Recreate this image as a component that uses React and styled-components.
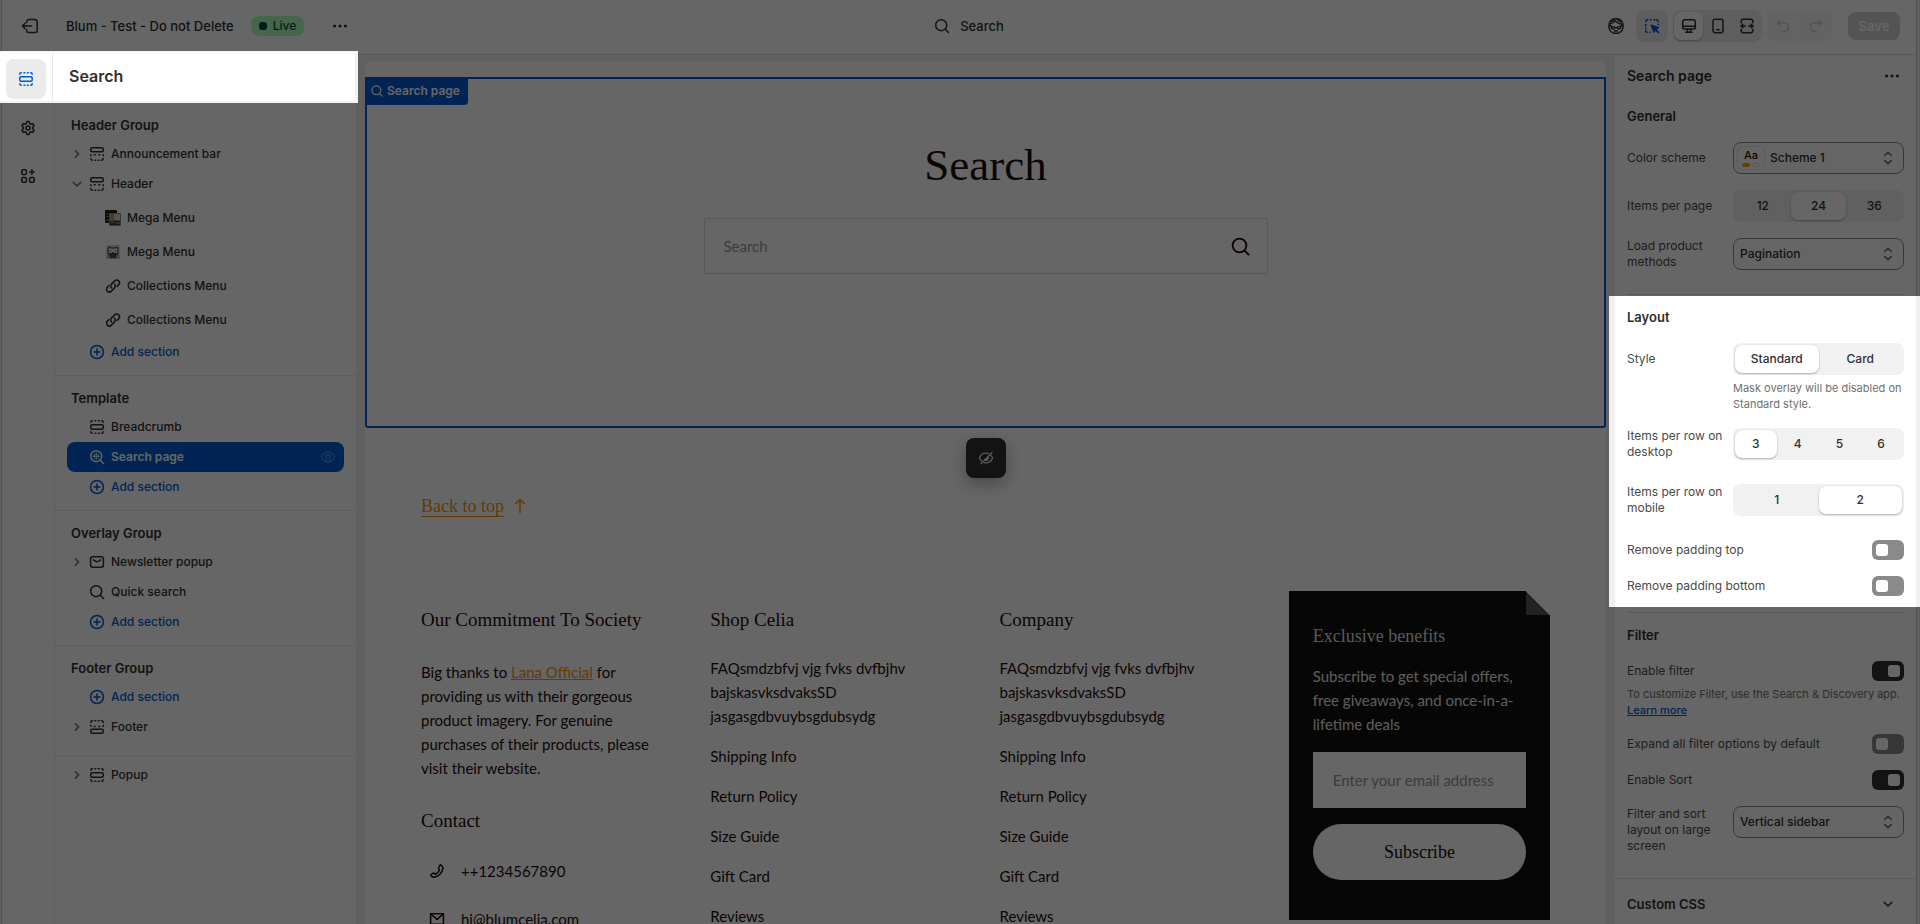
import React, { useState } from "react";
import styled, { createGlobalStyle, css } from "styled-components";

const SANS = `Inter, "Liberation Sans", sans-serif`;
const SERIF = `"Liberation Serif", serif`;
const STORE = `Lato, "Open Sans", sans-serif`;

/* ---------- icons ---------- */

const Icon = ({ size = 20, sw = 1.5, children }) => (
  <svg
    width={size}
    height={size}
    viewBox="0 0 20 20"
    fill="none"
    stroke="currentColor"
    strokeWidth={sw}
    strokeLinecap="round"
    strokeLinejoin="round"
    aria-hidden="true"
  >
    {children}
  </svg>
);

const SectionIcon = () => (
  <Icon>
    <rect x="3.8" y="7.8" width="12.4" height="4.4" rx="1.2" />
    <path d="M3.8 5.2c0-.9.6-1.5 1.5-1.5M16.2 5.2c0-.9-.6-1.5-1.5-1.5M8 3.7h.8M11.4 3.7h.8M3.8 14.8c0 .9.6 1.5 1.5 1.5M16.2 14.8c0 .9-.6 1.5-1.5 1.5M8 16.3h.8M11.4 16.3h.8" />
  </Icon>
);

const HeaderIcon = () => (
  <Icon>
    <rect x="3.8" y="3.8" width="12.4" height="4" rx="1.2" />
    <path d="M3.8 10.8v1M16.2 10.8v1M3.8 14.6c0 1 .7 1.7 1.6 1.7M16.2 14.6c0 1-.7 1.7-1.6 1.7M8 16.3h.8M11.4 16.3h.8M7.2 10.8h1M11.8 10.8h1" />
  </Icon>
);

const FooterIcon = () => (
  <Icon>
    <rect x="3.8" y="12.2" width="12.4" height="4" rx="1.2" />
    <path d="M3.8 9.2v-1M16.2 9.2v-1M3.8 5.4c0-1 .7-1.7 1.6-1.7M16.2 5.4c0-1-.7-1.7-1.6-1.7M8 3.7h.8M11.4 3.7h.8M7.2 9.4h1M11.8 9.4h1" />
  </Icon>
);

const SearchIcon = ({ size, sw }) => (
  <Icon size={size} sw={sw}>
    <circle cx="9.2" cy="9.2" r="5.5" />
    <path d="m13.3 13.3 3.2 3.2" />
  </Icon>
);

const SearchPageIcon = () => (
  <Icon sw={1.4}>
    <circle cx="9.2" cy="9.2" r="5.5" />
    <path d="m13.3 13.3 3.2 3.2" />
    <path d="M9.2 6v6.4M6 9.2h6.4" strokeWidth="1" />
    <path d="M7.2 6.8v4.8M11.2 6.8v4.8" strokeWidth="0.6" />
  </Icon>
);

const PlusIcon = () => (
  <Icon>
    <circle cx="10" cy="10" r="6.5" />
    <path d="M10 7v6M7 10h6" />
  </Icon>
);

const LinkIcon = () => (
  <Icon>
    <path d="M8.6 11.9a2.8 2.8 0 0 1 0-4l3-3a2.8 2.8 0 0 1 4 4l-1.5 1.5" />
    <path d="M11.4 8.1a2.8 2.8 0 0 1 0 4l-3 3a2.8 2.8 0 0 1-4-4l1.5-1.5" />
  </Icon>
);

const MailIcon = ({ sharp }) => (
  <Icon>
    <rect x="3.6" y="4.8" width="12.8" height="10.4" rx={sharp ? 0 : 2.2} />
    <path d={sharp ? "m4 5.2 6 5.2 6-5.2" : "m6.4 7.8 2.6 1.7c.6.4 1.4.4 2 0l2.6-1.7"} />
  </Icon>
);

const ChevronRight = () => (
  <Icon>
    <path d="m8.4 6.8 3.2 3.2-3.2 3.2" />
  </Icon>
);

const ChevronDown = () => (
  <Icon>
    <path d="m6.2 8.4 3.8 3.6 3.8-3.6" />
  </Icon>
);

const SelectIcon = () => (
  <Icon>
    <path d="m6.8 7.4 3.2-3 3.2 3M6.8 12.6l3.2 3 3.2-3" />
  </Icon>
);

const DotsIcon = () => (
  <Icon>
    <g fill="currentColor" stroke="none">
      <circle cx="4.6" cy="10" r="1.6" />
      <circle cx="10" cy="10" r="1.6" />
      <circle cx="15.4" cy="10" r="1.6" />
    </g>
  </Icon>
);

const ExitIcon = () => (
  <Icon>
    <path d="M6.6 6.6V5.8a2.3 2.3 0 0 1 2.3-2.3h6a2.3 2.3 0 0 1 2.3 2.3v8.4a2.3 2.3 0 0 1-2.3 2.3h-6a2.3 2.3 0 0 1-2.3-2.3v-.8" />
    <path d="M11.6 10H2.4M5 7.4 2.4 10 5 12.6" />
  </Icon>
);

const GearIcon = () => (
  <Icon>
    <path d="M8.9 3.5h2.2l.5 1.9 1.4.8 1.9-.5 1.2 2-1.4 1.4v1.8l1.4 1.4-1.2 2-1.9-.5-1.4.8-.5 1.9H8.9l-.5-1.9-1.4-.8-1.9.5-1.2-2 1.4-1.4V9.1L3.9 7.7l1.2-2 1.9.5 1.4-.8z" />
    <circle cx="10" cy="10" r="2" />
  </Icon>
);

const AppsIcon = () => (
  <Icon>
    <rect x="3.8" y="3.8" width="4.6" height="4.6" rx="1.2" />
    <rect x="3.8" y="11.6" width="4.6" height="4.6" rx="1.2" />
    <rect x="11.6" y="11.6" width="4.6" height="4.6" rx="1.2" />
    <path d="M13.9 3.8v4.6M11.6 6.1h4.6" />
  </Icon>
);

const EyeIcon = () => (
  <Icon sw={1.3}>
    <path d="M3.4 10c1.2-2.9 3.7-4.8 6.6-4.8s5.4 1.9 6.6 4.8c-1.2 2.9-3.7 4.8-6.6 4.8S4.6 12.9 3.4 10z" />
    <circle cx="10" cy="10" r="2.3" />
  </Icon>
);

const EyeOffIcon = () => (
  <Icon sw={1.4}>
    <path d="M12.5 5.6A6.5 6.5 0 0 0 10 5.1C7 5.1 4.5 7 3.4 10c.5 1.2 1.2 2.2 2.1 3M14.7 7.2c.8.7 1.4 1.7 1.9 2.8-1.2 3-3.6 4.9-6.6 4.9-.7 0-1.3-.1-1.9-.3" />
    <path d="M16 4.5 5 15.8M12.3 9.6a2.4 2.4 0 0 1-2.8 2.7z" />
  </Icon>
);

const SidekickIcon = () => (
  <Icon sw={1.4}>
    <rect x="3" y="2.8" width="14" height="14.4" rx="6.2" />
    <path d="M3.6 8.2C6 7.6 8 6.4 9 4.6c1.2 1.8 3.8 3.2 7.4 3.6M5.4 5.4 8 3.2M11.4 4l3 1.8" />
    <path d="M3.2 9.8c1.4 0 2 .4 2.600.8M16.800 9.800c-1.400 0-2 .4-2.600.8M9 11.600h2" />
    <path d="M5.400 11c.4-.8 3-.4 3.400.6.2 1-1 1.600-2 1.400S5 12 5.400 11zM14.600 11c-.4-.8-3-.4-3.400.6-.2 1 1 1.600 2 1.400s1.800-1 1.400-2z" />
    <path d="M8.4 15h3.2" />
  </Icon>
);

const InspectIcon = () => (
  <Icon sw={1.6}>
    <path d="M3.7 5.6c0-1.1.8-1.9 1.9-1.9M8.4 3.7h.8M12 3.7h.8M16.3 5.6c0-1.1-.8-1.9-1.9-1.9M3.7 8.6v.8M3.7 12v.4M3.7 14.8c0 .9.6 1.5 1.5 1.5M8 16.3h.4M16.3 8.2v.4" />
    <path d="m9.4 9.2 6.8 2.6-2.8 1.4-1.4 2.8z" fill="currentColor" />
    <path d="m13.6 13.6 2.8 2.8" strokeWidth="2" />
  </Icon>
);

const DesktopIcon = () => (
  <Icon>
    <rect x="3.7" y="3.7" width="12.6" height="9.4" rx="2.2" />
    <path d="M3.9 10.3h12.2M8.4 13.2v3M11.6 13.2v3M6.8 16.3h6.4" />
  </Icon>
);

const MobileIcon = () => (
  <Icon>
    <rect x="5" y="3.2" width="10" height="13.6" rx="2.2" />
    <path d="M8.8 13.8h2.4" />
  </Icon>
);

const FullWidthIcon = () => (
  <Icon>
    <path d="M4.2 6.8V5.4c0-1.2.9-2.1 2.1-2.1h7.4c1.2 0 2.1.9 2.1 2.1v1.4M4.2 13.2v1.4c0 1.2.9 2.1 2.1 2.1h7.4c1.2 0 2.1-.9 2.1-2.1v-1.4" />
    <path d="M3.8 10h4.6M11.6 10h4.6M5.8 8.2 4 10l1.8 1.8M14.2 8.2 16 10l-1.8 1.8" />
  </Icon>
);

const UndoIcon = () => (
  <Icon>
    <path d="M7.2 4.2 4.4 7l2.8 2.8M4.6 7H12a3.6 3.6 0 0 1 3.6 3.6v.8a3.8 3.8 0 0 1-3.8 4H9.8" />
  </Icon>
);

const RedoIcon = () => (
  <Icon>
    <path d="M12.8 4.2 15.6 7l-2.8 2.8M15.4 7H8a3.6 3.6 0 0 0-3.6 3.6v.8a3.8 3.8 0 0 0 3.8 4h2" />
  </Icon>
);

const PhoneIcon = () => (
  <Icon>
    <path d="M13.3 3.6c1.5 1 2.4 2 2.9 3.2-1 4.9-4.6 8.6-9.5 9.4-1.3-.3-2.3-1-3-2.2l2.6-2 2 1.2c2-.8 3.4-2.2 4.2-4.2L11.4 7z" />
  </Icon>
);

const ArrowUpIcon = () => (
  <Icon>
    <path d="M10 16.5v-13M5.8 7.6 10 3.4l4.2 4.2" />
  </Icon>
);

const ShelfThumb = () => (
  <svg width="20" height="20" viewBox="0 0 20 20" aria-hidden="true">
    <rect x="2" y="2" width="12" height="13" rx="1" fill="#1c1c1c" />
    <path d="M3 6h11M3 8.5h3M3 12h3" stroke="#777" />
    <rect x="6" y="5" width="12" height="13" rx="1" fill="#8c8780" />
    <rect x="7" y="6" width="3" height="7" fill="#c29a6a" />
    <rect x="11" y="6" width="6" height="6" fill="#d8d5cf" />
    <rect x="7" y="13" width="10" height="4" fill="#43403c" />
    <path d="M8 14.5h3M13 15h4" stroke="#aaa" />
  </svg>
);

const CartoonThumb = () => (
  <svg width="20" height="20" viewBox="0 0 20 20" aria-hidden="true">
    <rect x="3" y="3" width="14" height="14" rx="2" fill="#cfe3df" />
    <path d="M3 5a2 2 0 0 1 2-2h10a2 2 0 0 1 2 2v2H3z" fill="#a8dcef" />
    <path d="M3 13h14v2a2 2 0 0 1-2 2H5a2 2 0 0 1-2-2z" fill="#9fce8e" />
    <path d="M5 7l1-2 2 1h4l2-1 1 2v5H5z" fill="#e9e9ee" stroke="#333" />
    <path d="M5.5 11h9l-1.5 5H7z" fill="#57454f" />
    <path d="M7 9h1M12 9h1M9 11h2" stroke="#222" />
  </svg>
);

/* ---------- sidebar tree ---------- */

const treeData = [
  {
    title: "Header Group",
    rows: [
      { label: "Announcement bar", icon: <HeaderIcon />, chevron: "right" },
      { label: "Header", icon: <HeaderIcon />, chevron: "down" },
    ],
    children: [
      { label: "Mega Menu", icon: <ShelfThumb /> },
      { label: "Mega Menu", icon: <CartoonThumb /> },
      { label: "Collections Menu", icon: <LinkIcon /> },
      { label: "Collections Menu", icon: <LinkIcon /> },
    ],
    add: "end",
  },
  {
    title: "Template",
    rows: [
      { label: "Breadcrumb", icon: <SectionIcon /> },
      { label: "Search page", icon: <SearchPageIcon />, selected: true },
    ],
    add: "end",
  },
  {
    title: "Overlay Group",
    rows: [
      { label: "Newsletter popup", icon: <MailIcon />, chevron: "right" },
      { label: "Quick search", icon: <SearchIcon /> },
    ],
    add: "end",
  },
  {
    title: "Footer Group",
    rows: [{ label: "Footer", icon: <FooterIcon />, chevron: "right" }],
    add: "start",
  },
  {
    rows: [{ label: "Popup", icon: <SectionIcon />, chevron: "right" }],
  },
];

const TreeItem = ({ row, nested }) => (
  <li>
    <TreeRow type="button" $nested={nested} $selected={row.selected}>
      {!nested && (
        <IconBox $muted>
          {row.chevron === "right" && <ChevronRight />}
          {row.chevron === "down" && <ChevronDown />}
        </IconBox>
      )}
      <IconBox>{row.icon}</IconBox>
      <TreeLabel>{row.label}</TreeLabel>
      {row.selected && (
        <EyeBox>
          <EyeIcon />
        </EyeBox>
      )}
    </TreeRow>
  </li>
);

const AddSection = () => (
  <li>
    <TreeRow type="button" $add>
      <IconBox />
      <IconBox>
        <PlusIcon />
      </IconBox>
      <TreeLabel>Add section</TreeLabel>
    </TreeRow>
  </li>
);

const Tree = () => (
  <TreeNav aria-label="Sections">
    {treeData.map((group, i) => (
      <TreeGroup key={i} $untitled={!group.title} $short={group.add === "start"}>
        {group.title && <GroupTitle>{group.title}</GroupTitle>}
        <TreeList>
          {group.add === "start" && <AddSection />}
          {group.rows.map((row) => (
            <TreeItem key={row.label} row={row} />
          ))}
        </TreeList>
        {group.children && (
          <TreeList $children>
            {group.children.map((row, j) => (
              <TreeItem key={j} row={row} nested />
            ))}
          </TreeList>
        )}
        {group.add === "end" && (
          <TreeList>
            <AddSection />
          </TreeList>
        )}
      </TreeGroup>
    ))}
  </TreeNav>
);

/* ---------- settings controls ---------- */

const Segment = ({ name, label, options, initial, hint, wrapped }) => {
  const [value, setValue] = useState(initial);
  return (
    <Row $wrapped={wrapped} $top={hint || wrapped}>
      <RowLabel id={`${name}-label`} $tall={!wrapped}>
        {label}
      </RowLabel>
      <Control>
        <SegmentTrack role="radiogroup" aria-labelledby={`${name}-label`}>
          {options.map((option) => (
            <SegmentOption key={option} $active={option === value}>
              <HiddenRadio
                type="radio"
                name={name}
                checked={option === value}
                onChange={() => setValue(option)}
              />
              {option}
            </SegmentOption>
          ))}
        </SegmentTrack>
        {hint && <Hint>{hint}</Hint>}
      </Control>
    </Row>
  );
};

const Dropdown = ({ id, label, option, swatch, wrapped }) => (
  <Row $wrapped={wrapped} $top={wrapped}>
    <RowLabel as="label" htmlFor={id} $tall={!wrapped}>
      {label}
    </RowLabel>
    <SelectWrap>
      {swatch && (
        <Swatch aria-hidden="true">
          Aa
          <SwatchPills>
            <SwatchPill $fill />
            <SwatchPill />
          </SwatchPills>
        </Swatch>
      )}
      <Select id={id} $swatch={swatch}>
        <option>{option}</option>
      </Select>
      <SelectArrow>
        <SelectIcon />
      </SelectArrow>
    </SelectWrap>
  </Row>
);

const Toggle = ({ id, label, on }) => (
  <ToggleRow>
    <label htmlFor={id}>{label}</label>
    <Switch id={id} type="checkbox" defaultChecked={on} />
  </ToggleRow>
);

const links = [
  "FAQsmdzbfvj vjg fvks dvfbjhv bajskasvksdvaksSD jasgasgdbvuybsgdubsydg",
  "Shipping Info",
  "Return Policy",
  "Size Guide",
  "Gift Card",
  "Reviews",
];

const LinkColumn = ({ title }) => (
  <FooterColumn>
    <FooterTitle>{title}</FooterTitle>
    <LinkList>
      {links.map((link) => (
        <li key={link}>
          <StoreLink href="#">{link}</StoreLink>
        </li>
      ))}
    </LinkList>
  </FooterColumn>
);

const App = () => (
  <>
    <GlobalStyle />
    <Editor>
      <TopBar>
        <TopLeft>
          <PlainButton type="button" aria-label="Exit">
            <ExitIcon />
          </PlainButton>
          <ThemeName>Blum - Test - Do not Delete</ThemeName>
          <LiveBadge>Live</LiveBadge>
          <PlainButton type="button" aria-label="More actions">
            <DotsIcon />
          </PlainButton>
        </TopLeft>
        <PagePicker type="button">
          <SearchIcon />
          Search
        </PagePicker>
        <TopRight>
          <PlainButton type="button" aria-label="Sidekick">
            <SidekickIcon />
          </PlainButton>
          <InspectButton type="button" aria-label="Inspector">
            <InspectIcon />
          </InspectButton>
          <DeviceGroup>
            <DeviceButton type="button" aria-label="Desktop" $active>
              <DesktopIcon />
            </DeviceButton>
            <DeviceButton type="button" aria-label="Mobile">
              <MobileIcon />
            </DeviceButton>
            <DeviceButton type="button" aria-label="Fullscreen">
              <FullWidthIcon />
            </DeviceButton>
          </DeviceGroup>
          <HistoryGroup>
            <HistoryButton type="button" aria-label="Undo" disabled>
              <UndoIcon />
            </HistoryButton>
            <HistoryButton type="button" aria-label="Redo" disabled>
              <RedoIcon />
            </HistoryButton>
          </HistoryGroup>
          <SaveButton type="button" disabled>
            Save
          </SaveButton>
        </TopRight>
      </TopBar>

      <Workspace>
        <LeftPane>
          <TitleSpotlight>
            <TitleRail>
              <RailButton type="button" aria-label="Sections" $active>
                <SectionIcon />
              </RailButton>
            </TitleRail>
            <PageTitle>Search</PageTitle>
          </TitleSpotlight>
          <LeftBody>
            <Rail>
              <RailButton type="button" aria-label="Theme settings">
                <GearIcon />
              </RailButton>
              <RailButton type="button" aria-label="App embeds">
                <AppsIcon />
              </RailButton>
            </Rail>
            <Tree />
          </LeftBody>
        </LeftPane>

        <Canvas>
          <Preview>
            <SelectedSection>
              <SectionBadge>
                <SearchIcon size={16} />
                Search page
              </SectionBadge>
              <StoreHeading>Search</StoreHeading>
              <StoreSearch>
                <StoreSearchInput type="search" placeholder="Search" aria-label="Search products" />
                <PlainButton type="submit" aria-label="Submit search">
                  <SearchIcon size={25} />
                </PlainButton>
              </StoreSearch>
              <HideButton type="button" aria-label="Hide section">
                <EyeOffIcon />
              </HideButton>
            </SelectedSection>
            <StoreFooter>
              <BackToTop href="#">
                <span>Back to top</span>
                <ArrowUpIcon />
              </BackToTop>
              <FooterGrid>
                <FooterColumn>
                  <FooterTitle>Our Commitment To Society</FooterTitle>
                  <FooterText>
                    Big thanks to <AccentLink href="#">Lana Official</AccentLink> for providing us with
                    their gorgeous product imagery. For genuine purchases of their products, please
                    visit their website.
                  </FooterText>
                  <FooterTitle>Contact</FooterTitle>
                  <ContactList>
                    <ContactItem>
                      <PhoneIcon />
                      ++1234567890
                    </ContactItem>
                    <ContactItem>
                      <MailIcon sharp />
                      hi@blumcelia.com
                    </ContactItem>
                  </ContactList>
                </FooterColumn>
                <LinkColumn title="Shop Celia" />
                <LinkColumn title="Company" />
                <BenefitsCard>
                  <BenefitsTitle>Exclusive benefits</BenefitsTitle>
                  <BenefitsText>
                    Subscribe to get special offers, free giveaways, and once-in-a-lifetime deals
                  </BenefitsText>
                  <EmailInput
                    type="email"
                    placeholder="Enter your email address"
                    aria-label="Email address"
                  />
                  <SubscribeButton type="button">Subscribe</SubscribeButton>
                </BenefitsCard>
              </FooterGrid>
            </StoreFooter>
          </Preview>
        </Canvas>

        <Settings>
          <SettingsHeader>
            <SettingsTitle>Search page</SettingsTitle>
            <PlainButton type="button" aria-label="Section actions">
              <DotsIcon />
            </PlainButton>
          </SettingsHeader>

          <SettingsSection>
            <SectionTitle>General</SectionTitle>
            <Dropdown id="scheme" label="Color scheme" option="Scheme 1" swatch />
            <Segment
              name="per-page"
              label="Items per page"
              options={["12", "24", "36"]}
              initial="24"
            />
            <Dropdown id="load" label="Load product methods" option="Pagination" wrapped />
          </SettingsSection>

          <LayoutSpotlight>
            <SectionTitle>Layout</SectionTitle>
            <Segment
              name="style"
              label="Style"
              options={["Standard", "Card"]}
              initial="Standard"
              hint="Mask overlay will be disabled on Standard style."
            />
            <Segment
              name="row-desktop"
              label="Items per row on desktop"
              options={["3", "4", "5", "6"]}
              initial="3"
              wrapped
            />
            <Segment
              name="row-mobile"
              label="Items per row on mobile"
              options={["1", "2"]}
              initial="2"
              wrapped
            />
            <Toggle id="pad-top" label="Remove padding top" />
            <Toggle id="pad-bottom" label="Remove padding bottom" />
          </LayoutSpotlight>

          <SettingsSection $divided>
            <SectionTitle>Filter</SectionTitle>
            <div>
              <Toggle id="filter" label="Enable filter" on />
              <Hint>
                To customize Filter, use the Search &amp; Discovery app.{" "}
                <LearnMore href="#">Learn more</LearnMore>
              </Hint>
            </div>
            <Toggle id="expand" label="Expand all filter options by default" />
            <Toggle id="sort" label="Enable Sort" on />
            <Dropdown
              id="filter-layout"
              label="Filter and sort layout on large screen"
              option="Vertical sidebar"
              wrapped
            />
          </SettingsSection>

          <CustomCss type="button">
            Custom CSS
            <ChevronDown />
          </CustomCss>
        </Settings>
      </Workspace>
      <Dim />
    </Editor>
  </>
);

const GlobalStyle = createGlobalStyle`
  *, *::before, *::after {
    box-sizing: border-box;
  }

  body {
    margin: 0;
    background: #ececec;
    color: #303030;
    font-family: ${SANS};
    font-size: 12px;
    line-height: 16px;
    overflow: hidden;
  }

  h1, h2, h3, p, ul {
    margin: 0;
    padding: 0;
  }

  ul {
    list-style: none;
  }

  button, input, select {
    font: inherit;
    color: inherit;
  }

  button {
    padding: 0;
    border: 0;
    background: none;
    cursor: pointer;
  }

  svg {
    display: block;
    flex: none;
  }
`;

const Editor = styled.div`
  display: flex;
  flex-direction: column;
  height: 100vh;
  margin: 0 3px 0 1px;
  border-left: 1px solid #cfcfcf;
  border-right: 1px solid #cfcfcf;
  background: #fff;
`;

/* everything except the highlighted parts sits under this layer */
const Dim = styled.div`
  position: fixed;
  inset: 0;
  z-index: 1;
  background: rgba(0, 0, 0, 0.6);
  pointer-events: none;
`;

const highlighted = css`
  position: relative;
  z-index: 2;
  background: #fff;
`;

const PlainButton = styled.button`
  display: flex;
`;

/* ---------- top bar ---------- */

const TopBar = styled.header`
  flex: none;
  display: grid;
  grid-template-columns: minmax(0, 1fr) auto minmax(0, 1fr);
  align-items: center;
  height: 55px;
  padding: 0 16px 3px 18px;
  border-bottom: 1px solid #dcdcdc;
`;

const TopLeft = styled.div`
  display: flex;
  align-items: center;
`;

const ThemeName = styled.span`
  margin: 0 17px 0 26px;
  font-size: 13px;
  font-weight: 500;
`;

const LiveBadge = styled.span`
  display: flex;
  align-items: center;
  gap: 6px;
  height: 20px;
  margin-right: 26px;
  padding: 0 8px;
  border-radius: 8px;
  background: #affebf;
  color: #014b40;
  font-weight: 500;

  &::before {
    content: "";
    width: 8px;
    height: 8px;
    border-radius: 3px;
    background: #014b40;
  }
`;

const PagePicker = styled.button`
  display: flex;
  align-items: center;
  gap: 8px;
  padding-left: 16px;
  font-size: 13px;
  font-weight: 500;
`;

const TopRight = styled.div`
  display: flex;
  align-items: center;
  justify-content: flex-end;
`;

const InspectButton = styled.button`
  display: grid;
  place-items: center;
  width: 32px;
  height: 32px;
  margin: 0 5px 0 10px;
  border-radius: 8px;
  background: #ebebeb;
  color: #005bd3;
`;

const DeviceGroup = styled.div`
  display: flex;
  height: 32px;
  padding: 2px 1px;
  border-radius: 8px;
  background: #ebebeb;
`;

const DeviceButton = styled.button`
  display: grid;
  place-items: center;
  width: 29px;
  border-radius: 7px;
  ${({ $active }) =>
    $active &&
    css`
      background: #fff;
      box-shadow: 0 1px 2px rgba(0, 0, 0, 0.3);
    `}
`;

const HistoryGroup = styled.div`
  display: flex;
  gap: 1px;
  height: 32px;
  margin: 0 16px 0 5px;
  border-radius: 8px;
  overflow: hidden;
`;

const HistoryButton = styled.button`
  display: grid;
  place-items: center;
  width: 32px;
  background: #f7f7f7;
  color: #cfcfcf;
`;

const SaveButton = styled.button`
  width: 52px;
  height: 28px;
  border-radius: 8px;
  background: #d2d2d2;
  color: #fff;
  font-size: 13px;
  font-weight: 600;
`;

/* ---------- left pane ---------- */

const Workspace = styled.div`
  flex: 1;
  display: flex;
  min-height: 0;
`;

const LeftPane = styled.aside`
  flex: none;
  display: flex;
  flex-direction: column;
  width: 354px;
`;

const TitleSpotlight = styled.div`
  ${highlighted}
  display: flex;
  height: 52px;
  margin: -4px -2px 0;
  border: solid #f3f3f3;
  border-width: 1px 3px 2px 0;
`;

const TitleRail = styled.div`
  display: grid;
  place-items: center;
  width: 53px;
  padding-top: 4px;
  border-right: 1px solid #ebebeb;
`;

const PageTitle = styled.h1`
  padding: 12px 16px;
  font-size: 16px;
  line-height: 24px;
  font-weight: 600;
`;

const LeftBody = styled.div`
  flex: 1;
  display: flex;
`;

const Rail = styled.nav`
  display: flex;
  flex-direction: column;
  align-items: center;
  gap: 8px;
  width: 53px;
  padding-top: 5px;
  border-right: 1px solid #ebebeb;
`;

const RailButton = styled.button`
  display: grid;
  place-items: center;
  width: 40px;
  height: 40px;
  border-radius: 8px;
  background: ${({ $active }) => ($active ? "#ebebeb" : "none")};
  color: ${({ $active }) => ($active ? "#005bd3" : "inherit")};
`;

const TreeNav = styled.nav`
  flex: 1;
`;

const TreeGroup = styled.section`
  padding: ${({ $untitled }) => ($untitled ? "4px" : "8px")} 12px
    ${({ $short }) => ($short ? "13px" : "8px")};

  &:not(:last-child) {
    border-bottom: 1px solid #ebebeb;
  }
`;

const GroupTitle = styled.h2`
  padding-left: 4px;
  font-size: 13px;
  font-weight: 600;
  line-height: 28px;
`;

const TreeList = styled.ul`
  padding-top: ${({ $children }) => ($children ? "2px" : "0")};
`;

const TreeRow = styled.button`
  display: flex;
  align-items: center;
  width: 100%;
  height: ${({ $nested }) => ($nested ? "34px" : "30px")};
  padding-left: ${({ $nested }) => ($nested ? "36px" : "0")};
  border-radius: 8px;
  color: ${({ $add }) => ($add ? "#005bd3" : "#303030")};
  text-align: left;
  font-weight: 500;
  ${({ $selected }) =>
    $selected &&
    css`
      background: #005bd3;
      color: #fff;
      font-weight: 600;
    `}
`;

const IconBox = styled.span`
  flex: none;
  width: 20px;
  height: 20px;
  opacity: ${({ $muted }) => ($muted ? 0.7 : 1)};
`;

const TreeLabel = styled.span`
  flex: 1;
  padding-left: 4px;
`;

const EyeBox = styled.span`
  margin-right: 6px;
  opacity: 0.3;
`;

/* ---------- preview ---------- */

const Canvas = styled.main`
  flex: 1;
  min-width: 0;
  display: flex;
  padding: 6px 9px 0;
  background: #efefef;
`;

const Preview = styled.div`
  flex: 1;
  min-width: 0;
  padding-top: 16px;
  border-radius: 8px 8px 0 0;
  background: #fff;
  color: #1f0c0c;
  font-family: ${STORE};
  font-size: 15px;
  line-height: 24px;
  overflow: hidden;
`;

const SelectedSection = styled.section`
  position: relative;
  display: flex;
  flex-direction: column;
  align-items: center;
  height: 351px;
  padding: 58px 24px 0;
  border: 2px solid #005bd3;
  border-radius: 0 0 3px 3px;
`;

const SectionBadge = styled.div`
  position: absolute;
  top: -2px;
  left: -2px;
  display: flex;
  align-items: center;
  gap: 2px;
  height: 28px;
  padding: 0 8px 0 4px;
  border-radius: 0 0 4px 0;
  background: #005bd3;
  color: #fff;
  font-family: ${SANS};
  font-size: 12px;
  font-weight: 600;
`;

const StoreHeading = styled.h2`
  font-family: ${SERIF};
  font-size: 45px;
  font-weight: 400;
  line-height: 56px;
`;

const StoreSearch = styled.form`
  display: flex;
  align-items: center;
  width: 100%;
  max-width: 564px;
  height: 56px;
  margin-top: 25px;
  padding: 0 14px 0 0;
  border: 1px solid #dcdcdc;
`;

const StoreSearchInput = styled.input`
  flex: 1;
  min-width: 0;
  height: 100%;
  padding: 0 19px;
  border: 0;
  background: none;

  &::placeholder {
    color: #9d9494;
  }
`;

const HideButton = styled.button`
  position: absolute;
  top: calc(100% + 12px);
  left: 50%;
  display: grid;
  place-items: center;
  width: 40px;
  height: 40px;
  margin-left: -20px;
  border-radius: 8px;
  background: #303030;
  color: #dcdcdc;
  box-shadow: 0 6px 16px rgba(0, 0, 0, 0.3);
`;

const StoreFooter = styled.footer`
  padding: 66px 56px 0;
`;

const BackToTop = styled.a`
  display: inline-flex;
  align-items: center;
  gap: 6px;
  color: #f0960a;
  font-family: ${SERIF};
  font-size: 18px;
  text-decoration: none;

  span {
    text-decoration: underline;
    text-underline-offset: 4px;
  }
`;

const FooterGrid = styled.div`
  display: grid;
  grid-template-columns: repeat(4, minmax(0, 1fr));
  align-items: start;
  gap: 28px;
  margin-top: 73px;
`;

const FooterColumn = styled.div`
  padding-top: 15px;
`;

const FooterTitle = styled.h3`
  font-family: ${SERIF};
  font-size: 19px;
  font-weight: 400;
  line-height: 28px;
`;

const FooterText = styled.p`
  margin: 26px 0 27px;
  padding-right: 24px;
`;

const AccentLink = styled.a`
  color: #f0960a;
`;

const LinkList = styled.ul`
  display: flex;
  flex-direction: column;
  gap: 16px;
  margin-top: 22px;
`;

const StoreLink = styled.a`
  color: inherit;
  text-decoration: none;
`;

const ContactList = styled.ul`
  display: flex;
  flex-direction: column;
  gap: 24px;
  margin-top: 24px;
`;

const ContactItem = styled.li`
  display: flex;
  align-items: center;
  gap: 14px;
  padding-left: 6px;
`;

const BenefitsCard = styled.section`
  position: relative;
  display: flex;
  flex-direction: column;
  padding: 31px 24px 40px;
  background: #0f0f0f;
  color: #e8e8e8;

  /* folded corner */
  &::after {
    content: "";
    position: absolute;
    top: 0;
    right: 0;
    width: 24px;
    height: 24px;
    background: linear-gradient(to top right, #555 50%, #fff 50%);
  }
`;

const BenefitsTitle = styled.h3`
  font-family: ${SERIF};
  font-size: 18px;
  font-weight: 400;
  line-height: 28px;
  color: #dcdcdc;
`;

const BenefitsText = styled.p`
  margin: 14px 0 16px;
`;

const EmailInput = styled.input`
  width: 100%;
  height: 56px;
  padding: 0 20px;
  border: 0;
  border-radius: 0;
  background: #fff;

  &::placeholder {
    color: #9d9494;
  }
`;

const SubscribeButton = styled.button`
  height: 56px;
  margin-top: 16px;
  border-radius: 28px;
  background: #fff;
  color: #0f0f0f;
  font-family: ${SERIF};
  font-size: 18px;
`;

/* ---------- settings panel ---------- */

const Settings = styled.aside`
  flex: none;
  width: 301px;
`;

const SettingsHeader = styled.div`
  display: flex;
  align-items: center;
  justify-content: space-between;
  padding: 11px 14px 8px 12px;
`;

const SettingsTitle = styled.h2`
  font-size: 14px;
  font-weight: 600;
  line-height: 20px;
`;

const SettingsSection = styled.section`
  display: flex;
  flex-direction: column;
  gap: 16px;
  margin: 0 12px;
  padding: 12px 0 16px;
  ${({ $divided }) =>
    $divided
      ? "border-top: 1px solid #dedede;"
      : "border-bottom: 1px solid #dedede;"}
`;

const LayoutSpotlight = styled.section`
  ${highlighted}
  display: flex;
  flex-direction: column;
  gap: 16px;
  margin: 1px -4px 5px -6px;
  padding: 11px 12px;
  border: solid #f1f0ee;
  border-width: 0 4px 0 6px;
`;

const SectionTitle = styled.h3`
  font-size: 13px;
  font-weight: 600;
  line-height: 20px;
`;

const Row = styled.div`
  display: grid;
  grid-template-columns: minmax(0, 1fr) 171px;
  column-gap: 6px;
  align-items: ${({ $top }) => ($top ? "start" : "center")};
  padding-bottom: ${({ $wrapped }) => ($wrapped ? "8px" : "0")};
`;

const RowLabel = styled.span`
  color: #4a4a4a;
  line-height: ${({ $tall }) => ($tall ? "32px" : "16px")};
`;

const Control = styled.div`
  min-width: 0;
`;

const SegmentTrack = styled.div`
  display: flex;
  height: 32px;
  padding: 2px;
  border-radius: 8px;
  background: #f1f1f1;
`;

const SegmentOption = styled.label`
  position: relative;
  flex: 1;
  display: grid;
  place-items: center;
  border-radius: 7px;
  font-weight: 500;
  cursor: pointer;
  ${({ $active }) =>
    $active &&
    css`
      background: #fff;
      box-shadow: 0 1px 2px rgba(0, 0, 0, 0.25), 0 0 1px rgba(0, 0, 0, 0.2);
    `}
`;

const HiddenRadio = styled.input`
  position: absolute;
  inset: 0;
  margin: 0;
  opacity: 0;
  cursor: pointer;
`;

const Hint = styled.p`
  padding-top: 5px;
  color: #707070;
  font-size: 11px;
`;

const LearnMore = styled.a`
  color: #005bd3;
  font-weight: 500;
`;

const SelectWrap = styled.div`
  position: relative;
`;

const Select = styled.select`
  appearance: none;
  display: block;
  width: 100%;
  height: 32px;
  padding: 0 28px 0 ${({ $swatch }) => ($swatch ? "36px" : "6px")};
  border: 1px solid #8a8a8a;
  border-radius: 8px;
  background: #fdfdfd;
  font-weight: 500;
`;

const SelectArrow = styled.span`
  position: absolute;
  top: 6px;
  right: 6px;
  color: #707070;
  pointer-events: none;
`;

const Swatch = styled.span`
  position: absolute;
  top: 4px;
  left: 4px;
  display: flex;
  flex-direction: column;
  align-items: center;
  width: 28px;
  height: 24px;
  border: 1px solid #e3e3e3;
  border-radius: 5px;
  color: #1f0c0c;
  font-size: 11px;
  font-weight: 500;
  pointer-events: none;
`;

const SwatchPills = styled.span`
  display: flex;
  gap: 2px;
`;

const SwatchPill = styled.span`
  width: 8px;
  height: 4px;
  border: 1px solid ${({ $fill }) => ($fill ? "#ffa200" : "#dcdcdc")};
  border-radius: 2px;
  background: ${({ $fill }) => ($fill ? "#ffa200" : "#fff")};
`;

const ToggleRow = styled.div`
  display: flex;
  align-items: center;
  justify-content: space-between;
  height: 20px;
  color: #4a4a4a;
`;

const Switch = styled.input`
  appearance: none;
  width: 32px;
  height: 20px;
  margin: 0;
  padding: 4px;
  border-radius: 6px;
  background: #8a8a8a;
  cursor: pointer;

  &::before {
    content: "";
    display: block;
    width: 12px;
    height: 12px;
    border-radius: 3px;
    background: #fff;
  }

  &:checked {
    padding-left: 16px;
    background: #303030;
  }
`;

const CustomCss = styled.button`
  display: flex;
  align-items: center;
  justify-content: space-between;
  width: 100%;
  height: 50px;
  padding: 0 18px 0 12px;
  border-top: 1px solid #dedede;
  font-size: 13px;
  font-weight: 600;
`;

export default App;
